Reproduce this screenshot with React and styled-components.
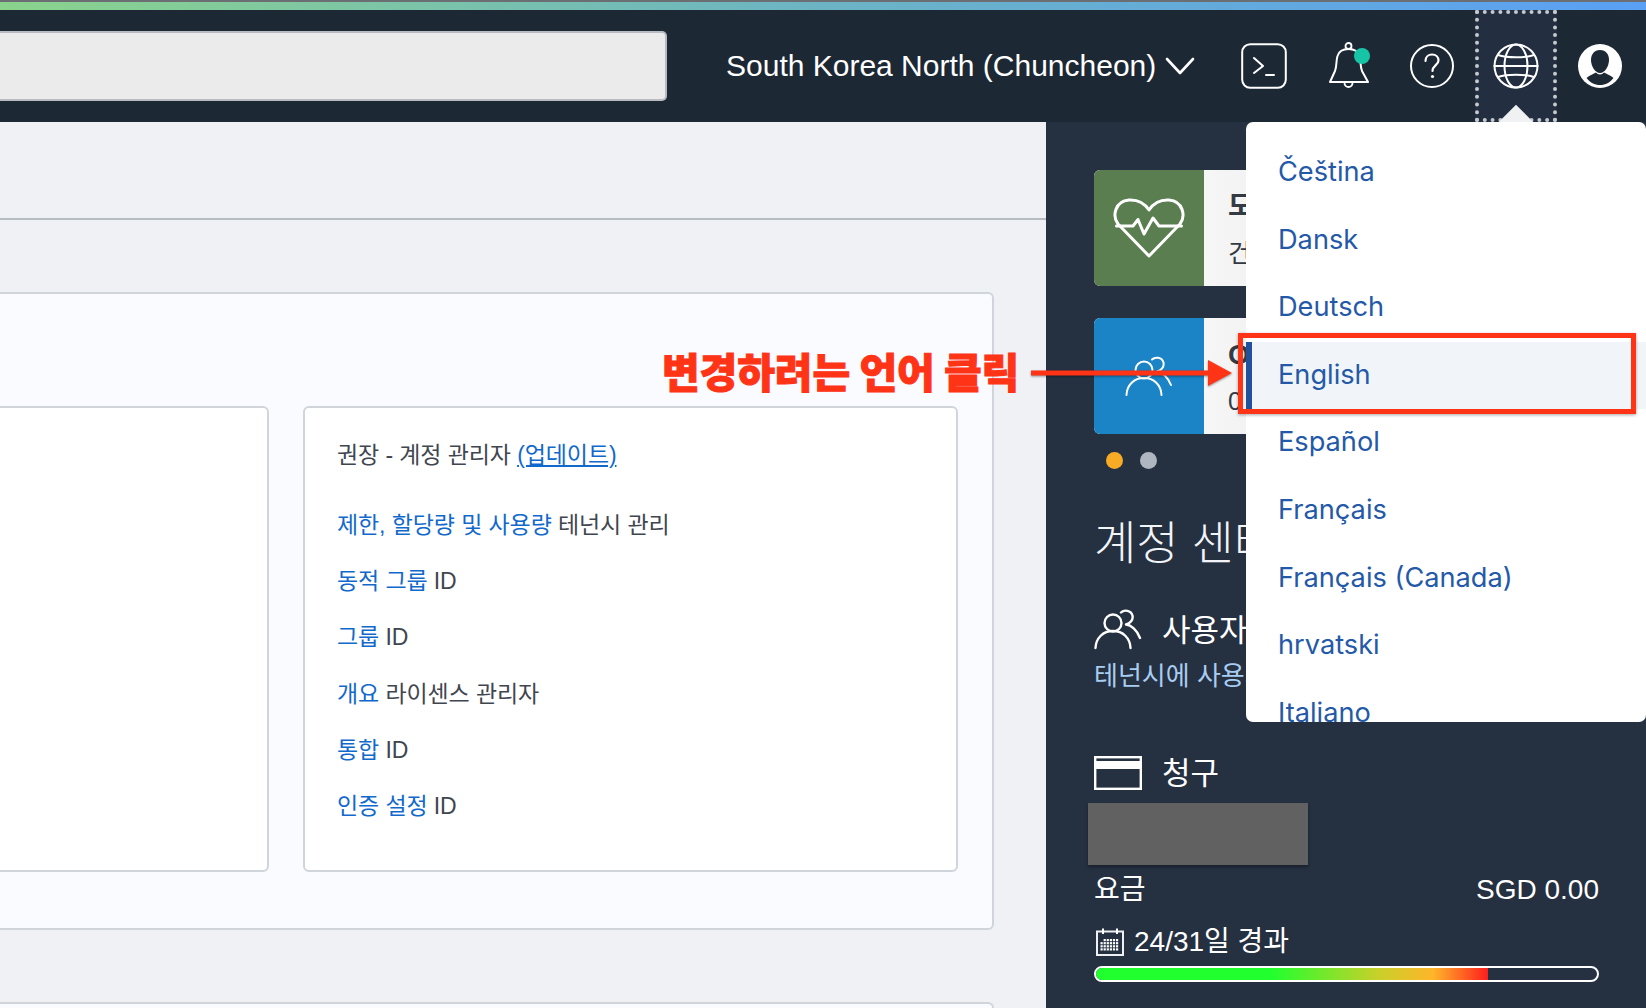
import React from "react";
import styled, { createGlobalStyle } from "styled-components";

const SANS = `"Liberation Sans", "Noto Sans CJK KR", sans-serif`;

const Global = createGlobalStyle`
  html, body { margin: 0; padding: 0; height: 100%; overflow: hidden; background: #eff1f5; }
  body { font-family: ${SANS}; }
  * { box-sizing: border-box; }
`;

const Page = styled.div`
  position: relative;
  width: 1646px;
  height: 1008px;
  overflow: hidden;
  display: flex;
  flex-direction: column;
`;

const TopStrip = styled.div`
  flex: none;
  height: 10px;
  border-top: 2px solid #6b6f73;
  background: linear-gradient(90deg, #8ad38c 0%, #6cb4c4 50%, #5aa0f5 100%);
`;

const Header = styled.header`
  flex: none;
  height: 112px;
  background: #1d2835;
  display: flex;
  align-items: center;
  padding-right: 4px;
`;

const Search = styled.div`
  flex: none;
  width: 667px;
  height: 70px;
  background: #ebebeb;
  border: 2px solid #b8bcc2;
  border-left: none;
  border-radius: 0 5px 5px 0;
`;

const Region = styled.div`
  flex: none;
  margin-left: 59px;
  display: flex;
  align-items: center;
  gap: 9px;
  color: #fff;
  font-size: 30px;
  width: 496px;
  white-space: nowrap;
`;

const IconCell = styled.div`
  position: relative;
  flex: none;
  width: 84px;
  height: 112px;
  display: flex;
  align-items: center;
  justify-content: center;
`;

const BellCell = styled(IconCell)`
  padding-left: 3px;
`;

const FocusCell = styled(IconCell)`
  &::before {
    content: "";
    position: absolute;
    inset: 0 1px 0 1px;
    background: #232f40;
    border: 4px dotted #c4c8cf;
  }
  & > svg { position: relative; }
  &::after {
    content: "";
    position: absolute;
    left: 27px;
    top: 101px;
    width: 30px;
    height: 30px;
    background: #f0f1f3;
    transform: rotate(45deg);
  }
`;

const Body = styled.div`
  flex: 1;
  display: flex;
  min-height: 0;
`;

const Main = styled.main`
  flex: none;
  width: 1046px;
  background: #eff1f5;
  display: flex;
  flex-direction: column;
`;

const CrumbBar = styled.div`
  flex: none;
  height: 98px;
  border-bottom: 2px solid #b5bcc2;
`;

const Content = styled.div`
  flex: 1;
  padding: 72px 52px 0 0;
  display: flex;
  flex-direction: column;
  gap: 72px;
`;

const OuterCard = styled.section`
  flex: none;
  height: 638px;
  background: #fafbff;
  border: 2px solid #d0d5dc;
  border-left: none;
  border-radius: 0 6px 6px 0;
  padding: 112px 34px 56px 0;
  display: grid;
  grid-template-columns: 1fr 655px;
  gap: 34px;
`;

const NextCard = styled.section`
  flex: 1;
  background: #fafbff;
  border: 2px solid #d0d5dc;
  border-left: none;
  border-bottom: none;
  border-radius: 0 6px 0 0;
`;

const InnerCard = styled.div`
  background: #fff;
  border: 2px solid #d0d5dc;
  border-radius: 6px;
`;

const LeftInner = styled(InnerCard)`
  border-left: none;
  border-radius: 0 6px 6px 0;
`;

const RightInner = styled(InnerCard)`
  padding: 27px 32px;
  display: flex;
  flex-direction: column;
  font-size: 23px;
  color: #3f4650;
  letter-spacing: -0.1px;
`;

const RoleLine = styled.div`
  height: 40px;
  line-height: 40px;
  margin-bottom: 30px;
  white-space: nowrap;
`;

const LinkLine = styled.div`
  height: 56.2px;
  line-height: 40px;
  white-space: nowrap;
`;

const Link = styled.a`
  color: #1269cc;
  text-decoration: ${(p) => (p.$under ? "underline" : "none")};
`;

const Side = styled.aside`
  flex: 1;
  background: #253041;
  padding: 48px 53px 0 48px;
  display: flex;
  flex-direction: column;
  color: #fff;
`;

const Tile = styled.div`
  flex: none;
  width: 505px;
  height: 116px;
  border-radius: 6px;
  overflow: hidden;
  display: flex;
  margin-bottom: ${(p) => p.$mb}px;
  background: linear-gradient(90deg, #fff 0, #f3f3f3 152px);
`;

const TileIcon = styled.div`
  flex: none;
  width: 110px;
  display: flex;
  align-items: center;
  justify-content: center;
  background: ${(p) => p.$bg};
`;

const TileText = styled.div`
  padding: 19px 0 0 24px;
  color: #333a44;
  white-space: nowrap;
`;

const TileTitle = styled.div`
  font-size: 28px;
  font-weight: 700;
  line-height: 36px;
`;

const TileSub = styled.div`
  font-size: 25px;
  line-height: 40px;
  margin-top: 8px;
`;

const Dots = styled.div`
  display: flex;
  gap: 17px;
  padding-left: 12px;
  margin-top: 18px;
  height: 18px;
`;

const Dot = styled.span`
  width: 17px;
  height: 17px;
  border-radius: 50%;
  background: ${(p) => p.$c};
`;

const SideTitle = styled.h2`
  margin: 40px 0 0;
  font-size: 46px;
  font-weight: 300;
  line-height: 66px;
  white-space: nowrap;
  color: #f2f4f7;
`;

const SectionHead = styled.div`
  display: flex;
  align-items: center;
  gap: 20px;
  font-size: 31px;
  font-weight: 400;
  white-space: nowrap;
  height: 42px;
`;

const HeadIcon = styled.span`
  flex: none;
  display: flex;
  margin-top: ${(p) => p.$shift}px;
`;

const UsersHead = styled(SectionHead)`
  margin-top: 30px;
`;

const SubLink = styled.div`
  margin-top: 10px;
  font-size: 26px;
  line-height: 36px;
  color: #a9cdf1;
  white-space: nowrap;
`;

const BillingHead = styled(SectionHead)`
  margin-top: 55px;
`;

const Redacted = styled.div`
  flex: none;
  width: 220px;
  height: 62px;
  margin: 12px 0 0 -6px;
  background: #616161;
  box-shadow: 0 2px 3px rgba(0, 0, 0, 0.35);
`;

const FeeRow = styled.div`
  margin-top: 5px;
  display: flex;
  justify-content: space-between;
  font-size: 28px;
  line-height: 40px;
`;

const DaysRow = styled.div`
  margin-top: 12px;
  display: flex;
  align-items: center;
  gap: 10px;
  padding-left: 2px;
  font-size: 28px;
  line-height: 40px;
`;

const Track = styled.div`
  margin-top: 4px;
  height: 16px;
  border: 2px solid #fff;
  border-radius: 8px;
  overflow: hidden;
  background: #253041;
`;

const Fill = styled.div`
  height: 100%;
  width: ${(p) => p.$pct}%;
  background: linear-gradient(90deg, #22ff2e 0%, #22ff2e 45%, #c8d02a 72%, #ffb52a 86%, #ff1e1e 100%);
`;

const Menu = styled.ul`
  position: absolute;
  left: 1246px;
  top: 122px;
  width: 400px;
  height: 600px;
  margin: 0;
  padding: 17px 0 0;
  list-style: none;
  background: #fff;
  border-radius: 7px;
  overflow: hidden;
  font-family: Inter, "Liberation Sans", sans-serif;
  font-size: 27.2px;
  color: #2459a8;
`;

const MenuItem = styled.li`
  height: 67.6px;
  line-height: 66px;
  padding-left: ${(p) => (p.$active ? 26 : 32)}px;
  white-space: nowrap;
  background: ${(p) => (p.$active ? "#f1f5f9" : "transparent")};
  border-left: ${(p) => (p.$active ? "6px solid #22529c" : "none")};
`;

const Note = styled.div`
  position: absolute;
  left: 662px;
  top: 345px;
  font-family: "Noto Sans CJK KR", sans-serif;
  font-size: 41px;
  font-weight: 900;
  line-height: 50px;
  letter-spacing: -0.1px;
  color: #ff3316;
  -webkit-text-stroke: 1px #ff3316;
  white-space: nowrap;
`;

const HighlightBox = styled.div`
  position: absolute;
  left: 1238px;
  top: 333px;
  width: 398px;
  height: 81px;
  border: 5px solid #ff3316;
  box-shadow: 0 1px 3px rgba(0, 0, 0, 0.35);
`;

const ArrowOverlay = styled.svg`
  position: absolute;
  left: 1028px;
  top: 355px;
  filter: drop-shadow(0 1px 1px rgba(0, 0, 0, 0.4));
`;

const stroke = { fill: "none", stroke: "#fff", strokeLinecap: "round", strokeLinejoin: "round" };

const Chevron = () => (
  <svg width="30" height="20" viewBox="0 0 30 20">
    <path d="M2 3 L15 17 L28 3" {...stroke} strokeWidth="2.6" />
  </svg>
);

const Terminal = () => (
  <svg width="46" height="46" viewBox="0 0 46 46">
    <rect x="1.2" y="1.2" width="43.6" height="43.6" rx="8" {...stroke} strokeWidth="2" />
    <path d="M13 15 L22 23 L13 30 M25 32 H33" {...stroke} strokeWidth="2" />
  </svg>
);

const Bell = () => (
  <svg width="42" height="48" viewBox="0 0 42 48" style={{ overflow: "visible" }}>
    <circle cx="19.5" cy="4" r="3" {...stroke} strokeWidth="1.8" />
    <path d="M1 40 L6 29 C8 24 7 18 8.5 14 C10 9 14 7 19.5 7 C25 7 29 9 30.5 14 C32 19 31 24 33 29 L39 40 Z" {...stroke} strokeWidth="2" />
    <path d="M15.5 41 A4 4 0 0 0 23.5 41" {...stroke} strokeWidth="1.8" />
    <circle cx="33" cy="14" r="8" fill="#16c5a5" />
  </svg>
);

const Help = () => (
  <svg width="44" height="44" viewBox="0 0 44 44">
    <circle cx="22" cy="22" r="21" {...stroke} strokeWidth="2" />
    <path d="M15.5 17 C15.5 13 18.5 10.5 22 10.5 C26 10.5 28.5 13 28.5 16.5 C28.5 21 22.5 21.5 22.5 27" {...stroke} strokeWidth="2.2" />
    <circle cx="22.5" cy="32.5" r="1.6" fill="#fff" />
  </svg>
);

const Globe = () => (
  <svg width="46" height="46" viewBox="0 0 46 46">
    <g {...stroke} strokeWidth="2">
      <circle cx="23" cy="23" r="21.5" />
      <ellipse cx="23" cy="23" rx="11.5" ry="21.5" />
      <path d="M1.5 23 H44.5 M5 12 C14 15 32 15 41 12 M5 34 C14 31 32 31 41 34" />
    </g>
  </svg>
);

const Avatar = () => (
  <svg width="44" height="44" viewBox="0 0 44 44">
    <circle cx="22" cy="22" r="22" fill="#fff" />
    <path d="M22 6 C28 6 31 10.5 31 16 C31 22 27 29 22 29 C17 29 13 22 13 16 C13 10.5 16 6 22 6 Z" fill="#1d2835" />
    <path d="M8.5 34 C12 31 15.5 30 18 28.5 C20 31 24 31 26 28.5 C28.5 30 32 31 35.5 34 C32 38.5 27.5 41 22 41 C16.5 41 12 38.5 8.5 34 Z" fill="#1d2835" />
  </svg>
);

const Heart = () => (
  <svg width="72" height="60" viewBox="0 0 72 60">
    <g {...stroke} strokeWidth="3">
      <path d="M36 58 L5 26 C-1 18 2 3 16 2 C25 1.5 32 6 36 12 C40 6 47 1.5 56 2 C70 3 73 18 67 26 Z" />
      <path d="M3.5 28 H20 L25 21.5 L31 36 L40 20 L46 28 H68.5" />
    </g>
  </svg>
);

const People = ({ sw = 2.4 }) => (
  <svg width="48" height="41" viewBox="0 0 48 41">
    <g {...stroke} strokeWidth={sw}>
      <circle cx="19" cy="14" r="8.5" />
      <path d="M1.5 39 C2 29 9 22 19 22 C29 22 36 29 36.5 39" />
      <path d="M27 3.5 C30 0.5 37 1 38.5 6.5 C39.5 11 36 14.5 32 15.5 C37 16 43 21 46 29" />
    </g>
  </svg>
);

const CardIcon = () => (
  <svg width="48" height="34" viewBox="0 0 48 34">
    <rect x="1.2" y="1.2" width="45.6" height="31.6" fill="none" stroke="#fff" strokeWidth="2.4" />
    <rect x="1" y="5" width="46" height="8" fill="#fff" />
  </svg>
);

const CalendarIcon = () => {
  const cells = [];
  for (let r = 0; r < 4; r++) {
    for (let c = 0; c < 6; c++) {
      if (r === 0 && c === 0) continue;
      cells.push(<rect key={`${r}-${c}`} x={4.5 + c * 3.1} y={11 + r * 3.1} width="2.2" height="2.2" fill="#fff" />);
    }
  }
  return (
    <svg width="28" height="28" viewBox="0 0 28 28">
      <rect x="1" y="3.5" width="26" height="23.5" fill="none" stroke="#eef0f3" strokeWidth="2" />
      <path d="M7 0.5 V6 M21 0.5 V6" stroke="#fff" strokeWidth="2" />
      {cells}
    </svg>
  );
};

const LANGS = ["Čeština", "Dansk", "Deutsch", "English", "Español", "Français", "Français (Canada)", "hrvatski", "Italiano"];

const LINES = [
  ["제한, 할당량 및 사용량", " 테넌시 관리"],
  ["동적 그룹", " ID"],
  ["그룹", " ID"],
  ["개요", " 라이센스 관리자"],
  ["통합", " ID"],
  ["인증 설정", " ID"],
];

export default function App() {
  return (
    <Page>
      <Global />
      <TopStrip />
      <Header>
        <Search />
        <Region>
          South Korea North (Chuncheon) <Chevron />
        </Region>
        <IconCell><Terminal /></IconCell>
        <BellCell><Bell /></BellCell>
        <IconCell><Help /></IconCell>
        <FocusCell><Globe /></FocusCell>
        <IconCell><Avatar /></IconCell>
      </Header>
      <Body>
        <Main>
          <CrumbBar />
          <Content>
            <OuterCard>
              <LeftInner />
              <RightInner>
                <RoleLine>
                  권장 - 계정 관리자 <Link $under>(업데이트)</Link>
                </RoleLine>
                {LINES.map(([a, b]) => (
                  <LinkLine key={a}>
                    <Link>{a}</Link>
                    {b}
                  </LinkLine>
                ))}
              </RightInner>
            </OuterCard>
            <NextCard />
          </Content>
        </Main>
        <Side>
          <Tile $mb={32}>
            <TileIcon $bg="#5b7e50"><Heart /></TileIcon>
            <TileText>
              <TileTitle>모니터링</TileTitle>
              <TileSub>건강</TileSub>
            </TileText>
          </Tile>
          <Tile $mb={0}>
            <TileIcon $bg="#1a84c7"><People sw={2} /></TileIcon>
            <TileText>
              <TileTitle>OCI</TileTitle>
              <TileSub>0</TileSub>
            </TileText>
          </Tile>
          <Dots>
            <Dot $c="#f8ac25" />
            <Dot $c="#b0b6bf" />
          </Dots>
          <SideTitle>계정 센터</SideTitle>
          <UsersHead>
            <HeadIcon $shift={4}><People /></HeadIcon>
            <span>사용자</span>
          </UsersHead>
          <SubLink>테넌시에 사용자 추가</SubLink>
          <BillingHead>
            <HeadIcon $shift={6}><CardIcon /></HeadIcon>
            <span>청구</span>
          </BillingHead>
          <Redacted />
          <FeeRow>
            <span>요금</span>
            <span>SGD 0.00</span>
          </FeeRow>
          <DaysRow>
            <CalendarIcon />
            <span>24/31일 경과</span>
          </DaysRow>
          <Track>
            <Fill $pct={78.2} />
          </Track>
        </Side>
      </Body>
      <Menu>
        {LANGS.map((l) => (
          <MenuItem key={l} $active={l === "English"}>{l}</MenuItem>
        ))}
      </Menu>
      <Note>변경하려는 언어 클릭</Note>
      <ArrowOverlay width="206" height="36" viewBox="0 0 206 36">
        <path d="M3 18 H182" stroke="#ff3316" strokeWidth="5" />
        <path d="M180 5 L204 18 L180 31 Z" fill="#ff3316" />
      </ArrowOverlay>
      <HighlightBox />
    </Page>
  );
}
